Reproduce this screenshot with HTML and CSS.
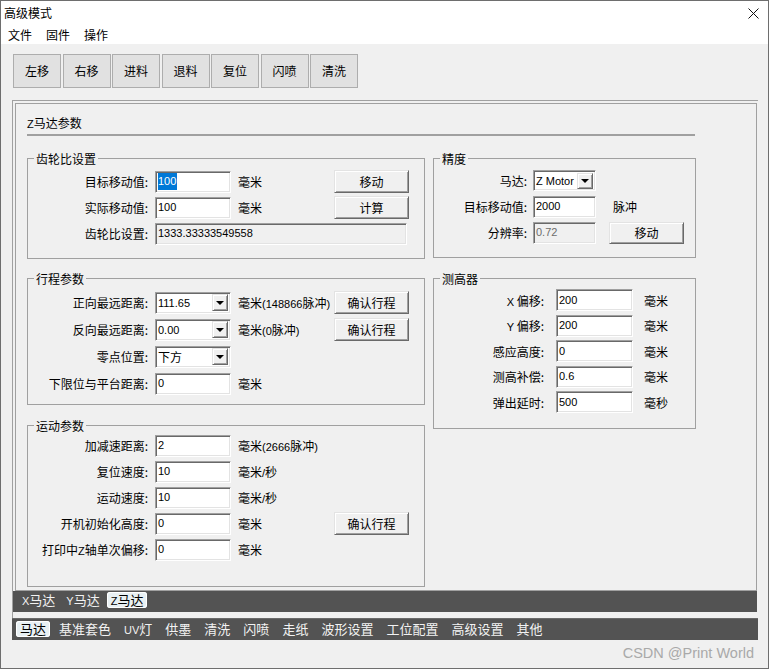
FILE: index.html
```html
<!DOCTYPE html>
<html lang="zh-CN">
<head>
<meta charset="utf-8">
<title>高级模式</title>
<link rel="stylesheet" href="styles.css">
</head>
<body>
<div class="window">
  <div class="titlebar">
    <span class="title">高级模式</span>
    <svg class="close" viewBox="0 0 11 11" width="11" height="11"><path d="M0.5 0.5L10.5 10.5M10.5 0.5L0.5 10.5" stroke="#111" stroke-width="1" fill="none"/></svg>
  </div>
  <div class="menubar">
    <span class="menu">文件</span>
    <span class="menu">固件</span>
    <span class="menu">操作</span>
  </div>
  <div class="content">
    <div class="toolbar">
      <div class="tbtn">左移</div>
      <div class="tbtn">右移</div>
      <div class="tbtn">进料</div>
      <div class="tbtn">退料</div>
      <div class="tbtn">复位</div>
      <div class="tbtn">闪喷</div>
      <div class="tbtn">清洗</div>
    </div>
    <div class="outer">
      <div class="outer-page">
        <div class="inner-page">
          <div class="ptitle"><span class="lat">Z</span>马达参数</div>
          <div class="sep"></div>
          <div class="cols">
            <div class="col">
              <div class="group g-gear">
                <div class="gtitle">齿轮比设置</div>
                <div class="form form-l f-gear">
                  <div class="lbl">目标移动值:</div>
                  <div class="field"><span class="sel">100</span></div>
                  <div class="unit">毫米</div>
                  <div class="btn">移动</div>
                  <div class="lbl">实际移动值:</div>
                  <div class="field">100</div>
                  <div class="unit">毫米</div>
                  <div class="btn">计算</div>
                  <div class="lbl">齿轮比设置:</div>
                  <div class="field ro wide">1333.33333549558</div>
                </div>
              </div>
              <div class="group g-travel">
                <div class="gtitle">行程参数</div>
                <div class="form form-l f-travel">
                  <div class="lbl">正向最远距离:</div>
                  <div class="field combo"><span>111.65</span><span class="arrow"></span></div>
                  <div class="unit">毫米<span class="lat">(148866</span>脉冲<span class="lat">)</span></div>
                  <div class="btn">确认行程</div>
                  <div class="lbl">反向最远距离:</div>
                  <div class="field combo"><span>0.00</span><span class="arrow"></span></div>
                  <div class="unit">毫米<span class="lat">(0</span>脉冲<span class="lat">)</span></div>
                  <div class="btn">确认行程</div>
                  <div class="lbl">零点位置:</div>
                  <div class="field combo"><span class="cjk">下方</span><span class="arrow"></span></div>
                  <div class="lbl">下限位与平台距离:</div>
                  <div class="field">0</div>
                  <div class="unit">毫米</div>
                </div>
              </div>
              <div class="group g-motion">
                <div class="gtitle">运动参数</div>
                <div class="form form-l f-motion">
                  <div class="lbl">加减速距离:</div>
                  <div class="field">2</div>
                  <div class="unit">毫米<span class="lat">(2666</span>脉冲<span class="lat">)</span></div>
                  <div class="lbl">复位速度:</div>
                  <div class="field">10</div>
                  <div class="unit">毫米<span class="lat">/</span>秒</div>
                  <div class="lbl">运动速度:</div>
                  <div class="field">10</div>
                  <div class="unit">毫米<span class="lat">/</span>秒</div>
                  <div class="lbl">开机初始化高度:</div>
                  <div class="field">0</div>
                  <div class="unit">毫米</div>
                  <div class="btn">确认行程</div>
                  <div class="lbl">打印中<span class="lat">Z</span>轴单次偏移:</div>
                  <div class="field">0</div>
                  <div class="unit">毫米</div>
                </div>
              </div>
            </div>
            <div class="col">
              <div class="group g-prec">
                <div class="gtitle">精度</div>
                <div class="form f-prec">
                  <div class="lbl">马达:</div>
                  <div class="field combo short"><span>Z Motor</span><span class="arrow"></span></div>
                  <div class="lbl">目标移动值:</div>
                  <div class="field">2000</div>
                  <div class="unit">脉冲</div>
                  <div class="lbl">分辨率:</div>
                  <div class="field ro gray">0.72</div>
                  <div class="btn">移动</div>
                </div>
              </div>
              <div class="group g-sensor">
                <div class="gtitle">测高器</div>
                <div class="form f-sensor">
                  <div class="lbl"><span class="lat">X</span> 偏移:</div>
                  <div class="field">200</div>
                  <div class="unit">毫米</div>
                  <div class="lbl"><span class="lat">Y</span> 偏移:</div>
                  <div class="field">200</div>
                  <div class="unit">毫米</div>
                  <div class="lbl">感应高度:</div>
                  <div class="field">0</div>
                  <div class="unit">毫米</div>
                  <div class="lbl">测高补偿:</div>
                  <div class="field">0.6</div>
                  <div class="unit">毫米</div>
                  <div class="lbl">弹出延时:</div>
                  <div class="field">500</div>
                  <div class="unit">毫秒</div>
                </div>
              </div>
            </div>
          </div>
        </div>
        <div class="strip strip-in">
          <span class="tab"><span class="tlat">X</span>马达</span>
          <span class="tab"><span class="tlat">Y</span>马达</span>
          <span class="tab on"><span class="tlat">Z</span>马达</span>
        </div>
      </div>
      <div class="strip strip-out">
        <span class="tab on">马达</span>
        <span class="tab">基准套色</span>
        <span class="tab"><span class="tlat">UV</span>灯</span>
        <span class="tab">供墨</span>
        <span class="tab">清洗</span>
        <span class="tab">闪喷</span>
        <span class="tab">走纸</span>
        <span class="tab">波形设置</span>
        <span class="tab">工位配置</span>
        <span class="tab">高级设置</span>
        <span class="tab">其他</span>
      </div>
    </div>
    <div class="wm">CSDN @Print World</div>
  </div>
</div>
</body>
</html>
```

FILE: styles.css
```css
* { box-sizing: border-box; }
html, body { margin: 0; padding: 0; background: #f0f0f0; }
body { font: 12px "Noto Sans CJK SC", "Noto Sans", sans-serif; color: #000; }

.window {
  width: 769px; height: 669px;
  border: 1px solid #6e6e6e;
  display: flex; flex-direction: column;
  background: #f0f0f0; overflow: hidden;
}
.titlebar {
  height: 21px; background: #fff;
  display: flex; justify-content: space-between; align-items: flex-start;
  padding: 3px 9px 0 3px;
}
.title { line-height: 18px; }
.close { margin-top: 4px; display: block; }
.menubar { height: 22px; background: #fff; display: flex; padding-top: 3px; }
.menu { padding: 0 7px; line-height: 19px; }

.content { flex: 1; padding: 10px 0 0 11px; display: flex; flex-direction: column; }
.toolbar { display: flex; gap: 1.5px; margin-left: 1px; }
.tbtn {
  width: 48px; height: 34px;
  background: #e1e1e1; border: 1px solid #adadad;
  display: flex; align-items: center; justify-content: center;
  padding-bottom: 1px;
}

.outer { margin-top: 12px; width: 746px; }
.outer-page {
  border-top: 1px solid #a0a0a0; border-left: 1px solid #a0a0a0;
  padding: 2px 1px 6px 2px;
}
.inner-page { height: 488px; border: 1px solid #a0a0a0; padding: 10px 0 0 11px; }
.ptitle { line-height: 17px; height: 17px; }
.sep { width: 668px; height: 2px; background: #a0a0a0; margin-top: 3px; }

.cols { display: grid; grid-template-columns: 398px 263px; column-gap: 8px; margin-top: 22px; align-items: start; }
.col { display: flex; flex-direction: column; }

.group { border: 1px solid #a0a0a0; }
.gtitle {
  margin: -9px 0 0 6px; padding: 0 2px;
  background: #f0f0f0; width: max-content; line-height: 17px; height: 17px;
}
.g-gear { height: 101px; }
.g-travel { height: 127px; margin-top: 19px; }
.g-motion { height: 162px; margin-top: 20px; }
.g-prec { height: 100px; }
.g-sensor { height: 151px; margin-top: 20px; }

.form { display: grid; grid-auto-rows: 23px; align-items: center; }
.form-l { grid-template-columns: 120px 76px 89px 75px; column-gap: 7px; }
.f-gear { margin-top: 3px; row-gap: 3px; }
.f-travel { margin-top: 4px; row-gap: 4px; }
.f-motion { margin-top: 0; row-gap: 3px; }
.f-prec { grid-template-columns: 99px 63px 88px; margin-top: 2px; row-gap: 3px; }
.f-sensor { grid-template-columns: 122px 77px auto; margin-top: 1.5px; row-gap: 2.5px; }

.lbl { grid-column: 1; text-align: right; white-space: nowrap; line-height: 17px; }
.f-prec .lbl { padding-right: 6px; }
.f-sensor .lbl { padding-right: 12px; }
.unit { white-space: nowrap; line-height: 17px; }
.f-prec .unit { padding-left: 17px; }
.f-sensor .unit { padding-left: 11px; }
.lat { font-family: "Liberation Sans", sans-serif; font-size: 11px; line-height: 0; }
.tlat { font-family: "Liberation Sans", sans-serif; font-size: 11px; line-height: 0; }
.cjk { font-family: "Noto Sans CJK SC", sans-serif; font-size: 12px; }

.field {
  height: 22px; background: #fff;
  border: 1px solid; border-color: #a0a0a0 #fff #fff #a0a0a0;
  box-shadow: inset 1px 1px #696969, inset -1px -1px #e3e3e3;
  padding: 0 2px 1px; display: flex; align-items: center;
  font: 11px "Liberation Sans", "Noto Sans CJK SC", sans-serif;
  white-space: nowrap; overflow: hidden;
}
.field.ro { background: #f0f0f0; }
.field.gray { color: #6d6d6d; }
.field.wide { grid-column: 2 / 5; width: 252px; }
.field.short { height: 21px; }
.sel { background: #0078d7; color: #fff; line-height: 17px; padding-right: 1px; }
.combo { padding-right: 2px; padding-bottom: 0; }
.arrow {
  margin-left: auto; width: 16px; height: 17px;
  background: #f0f0f0;
  border: 1px solid; border-color: #e3e3e3 #696969 #696969 #e3e3e3;
  box-shadow: inset 1px 1px #fff, inset -1px -1px #a0a0a0;
  display: flex; align-items: center; justify-content: center;
}
.short .arrow { height: 16px; }
.arrow::after {
  content: ""; width: 0; height: 0;
  border-top: 4px solid #000; border-left: 4px solid transparent; border-right: 4px solid transparent;
}

.btn {
  width: 75px; height: 23px; background: #f0f0f0;
  border: 1px solid; border-color: #e3e3e3 #696969 #696969 #e3e3e3;
  box-shadow: inset 1px 1px #fff, inset -1px -1px #a0a0a0;
  display: flex; align-items: center; justify-content: center;
  justify-self: end;
}
.f-prec .btn { height: 22px; }

.strip { display: flex; align-items: flex-start; background: #535353; gap: 5px; }
.strip-in { height: 21px; margin-left: -2px; width: 744px; padding: 1px 0 0 5px; gap: 3px; }
.strip-out { height: 22px; padding: 2px 0 0 4px; border-top: 1px solid #6a6a6a; gap: 5px; }
.tab { padding: 0 4px; color: #f2f2f2; font-size: 13px; line-height: 16px; height: 16px; border-radius: 3px; white-space: nowrap; }
.tab.on { background: #e8f0f3; color: #000; box-shadow: inset 0 0 0 1px #fff; }

.wm {
  align-self: flex-end; margin: 4px 14px 0 0;
  font: 14.5px "Liberation Sans", sans-serif; color: #a9a9a9; line-height: 18px;
}
```
